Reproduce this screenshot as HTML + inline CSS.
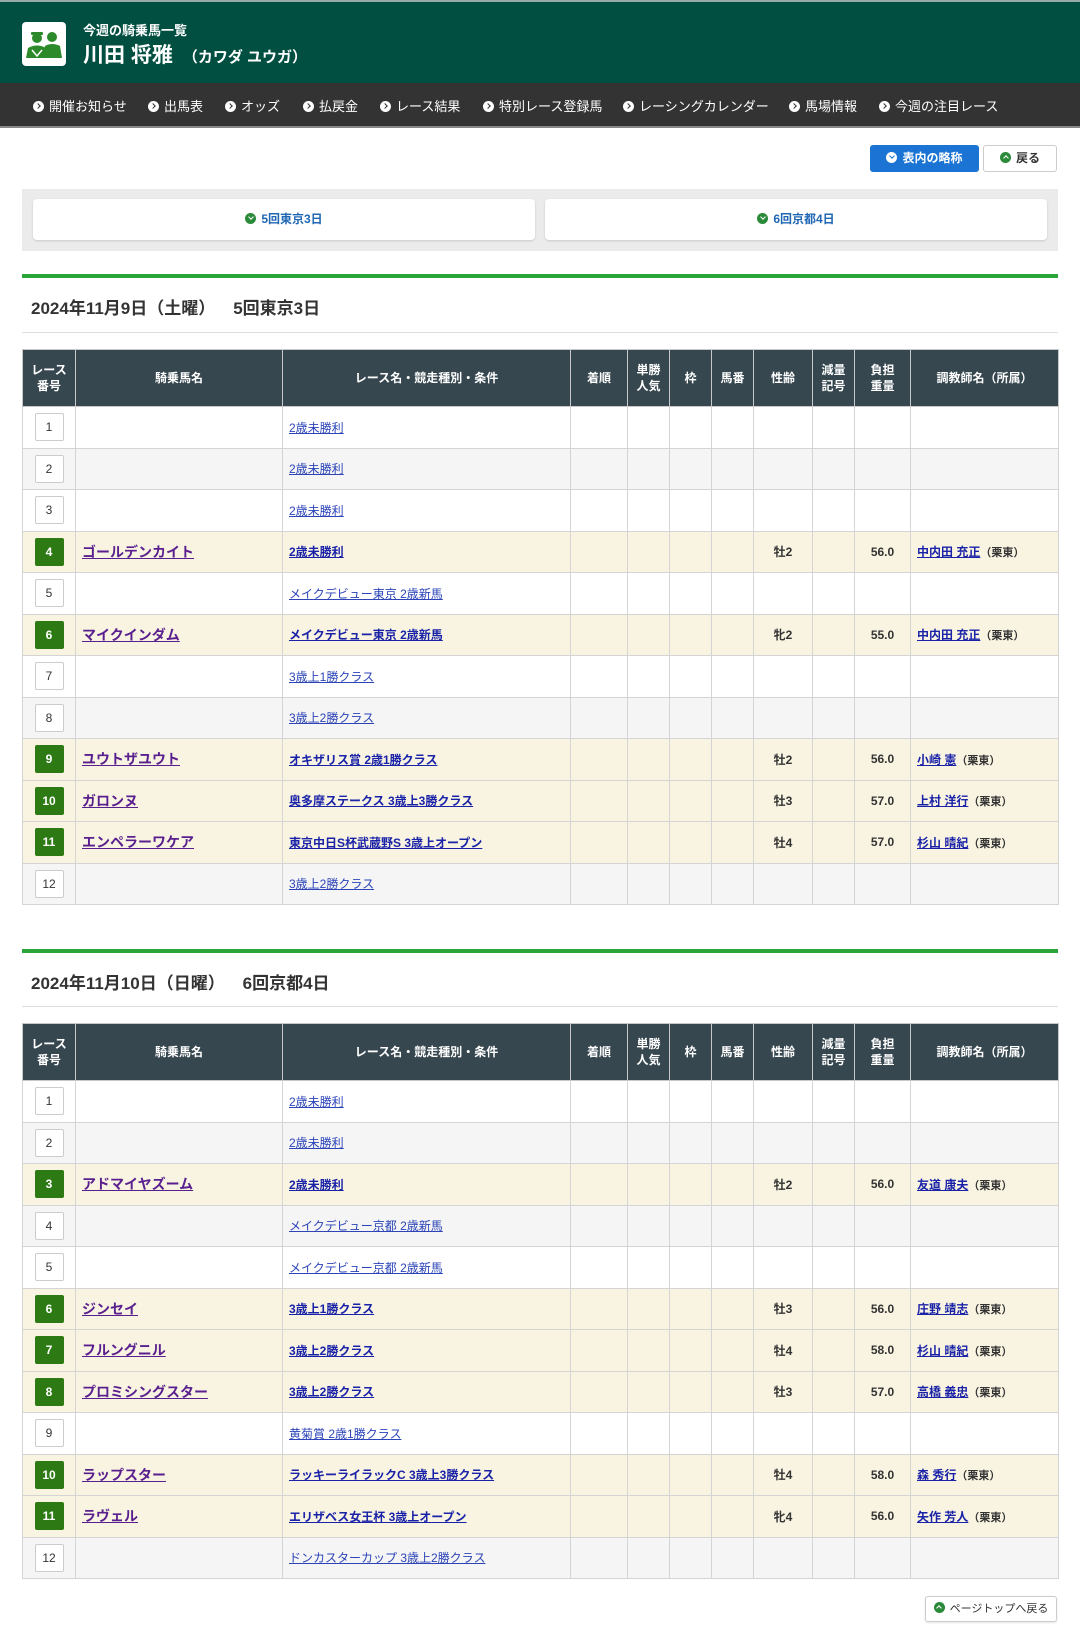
<!DOCTYPE html>
<html><head><meta charset="utf-8">
<style>
*{box-sizing:border-box;margin:0;padding:0}
body{width:1080px;height:1647px;background:#fff;font-family:"Liberation Sans","Noto Sans CJK JP",sans-serif;color:#333;position:relative;overflow:hidden}
.hdr{position:absolute;left:0;top:0;width:1080px;height:83px;background:#014f41;border-top:2px solid #9aa}
.logo{position:absolute;left:22px;top:20px;width:44px;height:44px;background:#fff;border-radius:4px}
.sub{position:absolute;left:83px;top:18px;color:#fff;font-size:13px;font-weight:bold}
.name{position:absolute;left:83px;top:37px;color:#fff;font-size:21px;font-weight:bold}
.name small{font-size:15px;margin-left:10px}
.nav{position:absolute;left:0;top:83px;width:1080px;height:45px;background:#333;border-bottom:2px solid #888}
.nav span{position:absolute;top:13px;color:#fff;font-size:13px;white-space:nowrap}
.ic{display:inline-block;width:11px;height:11px;border-radius:50%;vertical-align:-1px;margin-right:5px;position:relative}
.ic::after{content:"";position:absolute;width:3px;height:3px;border-right:1.6px solid var(--c);border-bottom:1.6px solid var(--c)}
.ic.r::after{left:2.5px;top:3.2px;transform:rotate(-45deg)}
.ic.d::after{left:3.6px;top:2.3px;transform:rotate(45deg)}
.ic.u::after{left:3.6px;top:4.3px;transform:rotate(-135deg)}
.btn{position:absolute;font-size:12px;font-weight:bold;text-align:center;border-radius:3px}
.tabs{position:absolute;left:22px;top:189px;width:1036px;height:62px;background:#ebebeb}
.tab{position:absolute;top:10px;height:41px;width:502px;background:#fff;border-radius:4px;box-shadow:0 1px 2px rgba(0,0,0,.15);text-align:center;line-height:41px;color:#1f67b3;font-size:12px;font-weight:bold}
.gl{position:absolute;left:22px;width:1036px;height:4px;background:#2aa53a}
.hl{position:absolute;left:22px;width:1036px;height:1px;background:#ddd}
.h2{position:absolute;left:31px;font-size:17px;font-weight:bold;color:#333;white-space:pre}
table{position:absolute;left:22px;width:1036px;border-collapse:collapse;table-layout:fixed}
th{background:#36474f;color:#fff;font-size:12px;font-weight:bold;height:57px;border:1px solid #c8c8c8;line-height:16px}
td{height:41.5px;border:1px solid #d4d4d4;font-size:12px;text-align:center}
tr.g td{background:#f5f5f5}
tr.r td{background:#f8f4e1}
td.l{text-align:left;padding-left:6px}
.n{display:inline-block;width:29px;height:28px;line-height:26px;border:1px solid #ccc;background:#fff;border-radius:2px;font-size:12px;color:#333}
tr.r .n{background:#2d7a14;border-color:#2d7a14;color:#fff;font-weight:bold}
a{color:#2c44b8;text-decoration:underline}
.hn{color:#5a1f8e;font-weight:bold;font-size:14px}
.rn{color:#1a22a8;font-weight:bold}
.tr{color:#1a22a8;font-weight:bold}
.s{font-size:11px;font-weight:bold;color:#333}
tr.r td.b{font-weight:bold}
</style></head><body>
<div class="hdr">
<div class="logo"><svg width="44" height="44" viewBox="0 0 44 44"><g fill="#2d8a2a"><circle cx="15" cy="16" r="5"/><rect x="9" y="10" width="12" height="3" rx="1"/><path d="M4 36 L6 26 Q15 21 24 26 L25 36Z"/><circle cx="30" cy="15" r="5"/><path d="M21 36 L23 24 Q30 20 38 24 L40 36Z"/></g><path d="M10 28 L15 34 L20 28" stroke="#fff" stroke-width="1.5" fill="none"/></svg></div>
<div class="sub">今週の騎乗馬一覧</div>
<div class="name">川田 将雅<small>（カワダ ユウガ）</small></div>
</div>
<div class="nav">
<span style="left:33px"><i class="ic r" style="background:#fff;--c:#333"></i>開催お知らせ</span>
<span style="left:148px"><i class="ic r" style="background:#fff;--c:#333"></i>出馬表</span>
<span style="left:225px"><i class="ic r" style="background:#fff;--c:#333"></i>オッズ</span>
<span style="left:303px"><i class="ic r" style="background:#fff;--c:#333"></i>払戻金</span>
<span style="left:380px"><i class="ic r" style="background:#fff;--c:#333"></i>レース結果</span>
<span style="left:483px"><i class="ic r" style="background:#fff;--c:#333"></i>特別レース登録馬</span>
<span style="left:623px"><i class="ic r" style="background:#fff;--c:#333"></i>レーシングカレンダー</span>
<span style="left:789px"><i class="ic r" style="background:#fff;--c:#333"></i>馬場情報</span>
<span style="left:879px"><i class="ic r" style="background:#fff;--c:#333"></i>今週の注目レース</span>
</div>
<div class="btn" style="left:870px;top:145px;width:109px;height:27px;line-height:27px;background:#1b74d4;color:#fff"><i class="ic d" style="background:#fff;--c:#1b74d4"></i>表内の略称</div>
<div class="btn" style="left:983px;top:145px;width:74px;height:27px;line-height:25px;background:#fff;border:1px solid #ccc;color:#333"><i class="ic u" style="background:#2a8a3a;--c:#fff"></i>戻る</div>
<div class="tabs">
<div class="tab" style="left:11px"><i class="ic d" style="background:#2a8a3a;--c:#fff"></i>5回東京3日</div>
<div class="tab" style="left:523px"><i class="ic d" style="background:#2a8a3a;--c:#fff"></i>6回京都4日</div>
</div>

<div class="gl" style="top:274px"></div>
<div class="h2" style="top:294px">2024年11月9日（土曜）　  5回東京3日</div>
<div class="hl" style="top:332px"></div>
<table style="top:349px">
<colgroup><col style="width:53px"><col style="width:207px"><col style="width:288px"><col style="width:57px"><col style="width:42px"><col style="width:42px"><col style="width:42px"><col style="width:59px"><col style="width:42px"><col style="width:56px"><col style="width:148px"></colgroup>
<tr><th>レース<br>番号</th><th>騎乗馬名</th><th>レース名・競走種別・条件</th><th>着順</th><th>単勝<br>人気</th><th>枠</th><th>馬番</th><th>性齢</th><th>減量<br>記号</th><th>負担<br>重量</th><th>調教師名（所属）</th></tr>
<tr><td><span class="n">1</span></td><td></td><td class="l"><a>2歳未勝利</a></td><td></td><td></td><td></td><td></td><td></td><td></td><td></td><td></td></tr>
<tr class="g"><td><span class="n">2</span></td><td></td><td class="l"><a>2歳未勝利</a></td><td></td><td></td><td></td><td></td><td></td><td></td><td></td><td></td></tr>
<tr><td><span class="n">3</span></td><td></td><td class="l"><a>2歳未勝利</a></td><td></td><td></td><td></td><td></td><td></td><td></td><td></td><td></td></tr>
<tr class="r"><td><span class="n">4</span></td><td class="l"><a class="hn">ゴールデンカイト</a></td><td class="l"><a class="rn">2歳未勝利</a></td><td></td><td></td><td></td><td></td><td class="b">牡2</td><td></td><td class="b">56.0</td><td class="l"><a class="tr">中内田 充正</a><span class="s">（栗東）</span></td></tr>
<tr><td><span class="n">5</span></td><td></td><td class="l"><a>メイクデビュー東京 2歳新馬</a></td><td></td><td></td><td></td><td></td><td></td><td></td><td></td><td></td></tr>
<tr class="r"><td><span class="n">6</span></td><td class="l"><a class="hn">マイクインダム</a></td><td class="l"><a class="rn">メイクデビュー東京 2歳新馬</a></td><td></td><td></td><td></td><td></td><td class="b">牝2</td><td></td><td class="b">55.0</td><td class="l"><a class="tr">中内田 充正</a><span class="s">（栗東）</span></td></tr>
<tr><td><span class="n">7</span></td><td></td><td class="l"><a>3歳上1勝クラス</a></td><td></td><td></td><td></td><td></td><td></td><td></td><td></td><td></td></tr>
<tr class="g"><td><span class="n">8</span></td><td></td><td class="l"><a>3歳上2勝クラス</a></td><td></td><td></td><td></td><td></td><td></td><td></td><td></td><td></td></tr>
<tr class="r"><td><span class="n">9</span></td><td class="l"><a class="hn">ユウトザユウト</a></td><td class="l"><a class="rn">オキザリス賞 2歳1勝クラス</a></td><td></td><td></td><td></td><td></td><td class="b">牡2</td><td></td><td class="b">56.0</td><td class="l"><a class="tr">小崎 憲</a><span class="s">（栗東）</span></td></tr>
<tr class="r"><td><span class="n">10</span></td><td class="l"><a class="hn">ガロンヌ</a></td><td class="l"><a class="rn">奥多摩ステークス 3歳上3勝クラス</a></td><td></td><td></td><td></td><td></td><td class="b">牡3</td><td></td><td class="b">57.0</td><td class="l"><a class="tr">上村 洋行</a><span class="s">（栗東）</span></td></tr>
<tr class="r"><td><span class="n">11</span></td><td class="l"><a class="hn">エンペラーワケア</a></td><td class="l"><a class="rn">東京中日S杯武蔵野S 3歳上オープン</a></td><td></td><td></td><td></td><td></td><td class="b">牡4</td><td></td><td class="b">57.0</td><td class="l"><a class="tr">杉山 晴紀</a><span class="s">（栗東）</span></td></tr>
<tr class="g"><td><span class="n">12</span></td><td></td><td class="l"><a>3歳上2勝クラス</a></td><td></td><td></td><td></td><td></td><td></td><td></td><td></td><td></td></tr>
</table>

<div class="gl" style="top:949px"></div>
<div class="h2" style="top:969px">2024年11月10日（日曜）　  6回京都4日</div>
<div class="hl" style="top:1006px"></div>
<table style="top:1023px">
<colgroup><col style="width:53px"><col style="width:207px"><col style="width:288px"><col style="width:57px"><col style="width:42px"><col style="width:42px"><col style="width:42px"><col style="width:59px"><col style="width:42px"><col style="width:56px"><col style="width:148px"></colgroup>
<tr><th>レース<br>番号</th><th>騎乗馬名</th><th>レース名・競走種別・条件</th><th>着順</th><th>単勝<br>人気</th><th>枠</th><th>馬番</th><th>性齢</th><th>減量<br>記号</th><th>負担<br>重量</th><th>調教師名（所属）</th></tr>
<tr><td><span class="n">1</span></td><td></td><td class="l"><a>2歳未勝利</a></td><td></td><td></td><td></td><td></td><td></td><td></td><td></td><td></td></tr>
<tr class="g"><td><span class="n">2</span></td><td></td><td class="l"><a>2歳未勝利</a></td><td></td><td></td><td></td><td></td><td></td><td></td><td></td><td></td></tr>
<tr class="r"><td><span class="n">3</span></td><td class="l"><a class="hn">アドマイヤズーム</a></td><td class="l"><a class="rn">2歳未勝利</a></td><td></td><td></td><td></td><td></td><td class="b">牡2</td><td></td><td class="b">56.0</td><td class="l"><a class="tr">友道 康夫</a><span class="s">（栗東）</span></td></tr>
<tr class="g"><td><span class="n">4</span></td><td></td><td class="l"><a>メイクデビュー京都 2歳新馬</a></td><td></td><td></td><td></td><td></td><td></td><td></td><td></td><td></td></tr>
<tr><td><span class="n">5</span></td><td></td><td class="l"><a>メイクデビュー京都 2歳新馬</a></td><td></td><td></td><td></td><td></td><td></td><td></td><td></td><td></td></tr>
<tr class="r"><td><span class="n">6</span></td><td class="l"><a class="hn">ジンセイ</a></td><td class="l"><a class="rn">3歳上1勝クラス</a></td><td></td><td></td><td></td><td></td><td class="b">牡3</td><td></td><td class="b">56.0</td><td class="l"><a class="tr">庄野 靖志</a><span class="s">（栗東）</span></td></tr>
<tr class="r"><td><span class="n">7</span></td><td class="l"><a class="hn">フルングニル</a></td><td class="l"><a class="rn">3歳上2勝クラス</a></td><td></td><td></td><td></td><td></td><td class="b">牡4</td><td></td><td class="b">58.0</td><td class="l"><a class="tr">杉山 晴紀</a><span class="s">（栗東）</span></td></tr>
<tr class="r"><td><span class="n">8</span></td><td class="l"><a class="hn">プロミシングスター</a></td><td class="l"><a class="rn">3歳上2勝クラス</a></td><td></td><td></td><td></td><td></td><td class="b">牡3</td><td></td><td class="b">57.0</td><td class="l"><a class="tr">高橋 義忠</a><span class="s">（栗東）</span></td></tr>
<tr><td><span class="n">9</span></td><td></td><td class="l"><a>黄菊賞 2歳1勝クラス</a></td><td></td><td></td><td></td><td></td><td></td><td></td><td></td><td></td></tr>
<tr class="r"><td><span class="n">10</span></td><td class="l"><a class="hn">ラップスター</a></td><td class="l"><a class="rn">ラッキーライラックC 3歳上3勝クラス</a></td><td></td><td></td><td></td><td></td><td class="b">牡4</td><td></td><td class="b">58.0</td><td class="l"><a class="tr">森 秀行</a><span class="s">（栗東）</span></td></tr>
<tr class="r"><td><span class="n">11</span></td><td class="l"><a class="hn">ラヴェル</a></td><td class="l"><a class="rn">エリザベス女王杯 3歳上オープン</a></td><td></td><td></td><td></td><td></td><td class="b">牝4</td><td></td><td class="b">56.0</td><td class="l"><a class="tr">矢作 芳人</a><span class="s">（栗東）</span></td></tr>
<tr class="g"><td><span class="n">12</span></td><td></td><td class="l"><a>ドンカスターカップ 3歳上2勝クラス</a></td><td></td><td></td><td></td><td></td><td></td><td></td><td></td><td></td></tr>
</table>

<div class="btn" style="left:925px;top:1596px;width:132px;height:26px;line-height:24px;background:#fff;border:1px solid #ccc;color:#333;font-weight:normal;font-size:11px;box-shadow:0 1px 2px rgba(0,0,0,.1)"><i class="ic u" style="background:#2a8a3a;--c:#fff"></i>ページトップへ戻る</div>
</body></html>
